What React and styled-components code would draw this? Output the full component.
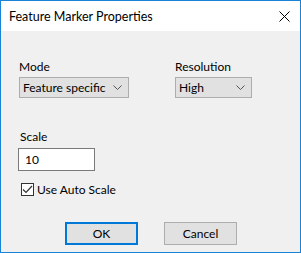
import React from 'react'
import styled, { createGlobalStyle } from 'styled-components'

const Global = createGlobalStyle`
    html, body {
        margin: 0;
        padding: 0;
        background: #ffffff;
    }
    * {
        box-sizing: border-box;
    }
`

const Window = styled.div`
    width: 301px;
    height: 253px;
    border: 1px solid #1883d7;
    background: #f0f0f0;
    display: flex;
    flex-direction: column;
    font-family: Lato, "Noto Sans", "Liberation Sans", sans-serif;
    font-size: 12px;
    color: #000;
`

const TitleBar = styled.div`
    height: 30px;
    background: #ffffff;
    display: flex;
    align-items: center;
    justify-content: space-between;
    padding-left: 8px;
`

const Title = styled.span`
    font-size: 12.5px;
    line-height: 15px;
`

const CloseButton = styled.div`
    width: 32px;
    height: 30px;
    display: flex;
    align-items: center;
    justify-content: center;
`

const Body = styled.div`
    flex: 1;
    display: flex;
    flex-direction: column;
    padding: 28px 0 0 18px;
`

const FieldRow = styled.div`
    display: flex;
`

const Group = styled.div`
    display: flex;
    flex-direction: column;
    width: ${p => p.$width || 'auto'};
    margin-top: ${p => p.$top || 0}px;
`

const Label = styled.div`
    line-height: 15px;
    margin-bottom: ${p => p.$gap || 3}px;
    padding-left: ${p => p.$indent || 0}px;
`

const Combo = styled.div`
    width: ${p => p.$width}px;
    height: 21px;
    border: 1px solid #adadad;
    background: #e1e1e1;
    display: flex;
    align-items: center;
    justify-content: space-between;
    padding: 0 6px 0 3px;
    line-height: 15px;
    white-space: nowrap;
`

const TextBox = styled.div`
    width: 77px;
    height: 23px;
    margin-left: -1px;
    border: 1px solid #7a7a7a;
    background: #ffffff;
    display: flex;
    align-items: center;
    padding-left: 6px;
`

const CheckRow = styled.div`
    display: flex;
    align-items: center;
    gap: 3px;
    margin-top: 11px;
    padding-left: 2px;
`

const CheckBox = styled.div`
    width: 13px;
    height: 13px;
    border: 1px solid #333333;
    background: #ffffff;
    display: flex;
    align-items: center;
    justify-content: center;
`

const Footer = styled.div`
    display: flex;
    gap: 26px;
    margin-top: 25px;
    padding-left: 46px;
`

const Button = styled.div`
    width: 73px;
    height: 23px;
    background: #e1e1e1;
    border: ${p => (p.$primary ? '2px solid #0078d7' : '1px solid #adadad')};
    display: flex;
    align-items: center;
    justify-content: center;
`

const Chevron = () => (
    <svg width='9' height='5' viewBox='0 0 9 5'>
        <path d='M0.5 0.5 L4.5 4.5 L8.5 0.5' fill='none' stroke='#555' strokeWidth='1' />
    </svg>
)

const App = () => {
    return (
        <>
            <Global />
            <Window>
                <TitleBar>
                    <Title>Feature Marker Properties</Title>
                    <CloseButton>
                        <svg width='11' height='11' viewBox='0 0 11 11'>
                            <path d='M0.5 0.5 L10.5 10.5 M10.5 0.5 L0.5 10.5' stroke='#000' strokeWidth='1' />
                        </svg>
                    </CloseButton>
                </TitleBar>
                <Body>
                    <FieldRow>
                        <Group $width='156px'>
                            <Label>Mode</Label>
                            <Combo $width={110}>
                                <span>Feature specific</span>
                                <Chevron />
                            </Combo>
                        </Group>
                        <Group>
                            <Label>Resolution</Label>
                            <Combo $width={77}>
                                <span>High</span>
                                <Chevron />
                            </Combo>
                        </Group>
                    </FieldRow>
                    <Group $top={31}>
                        <Label $gap={4} $indent={1}>Scale</Label>
                        <TextBox>10</TextBox>
                    </Group>
                    <CheckRow>
                        <CheckBox>
                            <svg width='11' height='9' viewBox='0 0 11 9'>
                                <path d='M1 4.5 L4 7.5 L10 1' fill='none' stroke='#333' strokeWidth='1.2' />
                            </svg>
                        </CheckBox>
                        <span>Use Auto Scale</span>
                    </CheckRow>
                    <Footer>
                        <Button $primary>OK</Button>
                        <Button>Cancel</Button>
                    </Footer>
                </Body>
            </Window>
        </>
    )
}

export default App
